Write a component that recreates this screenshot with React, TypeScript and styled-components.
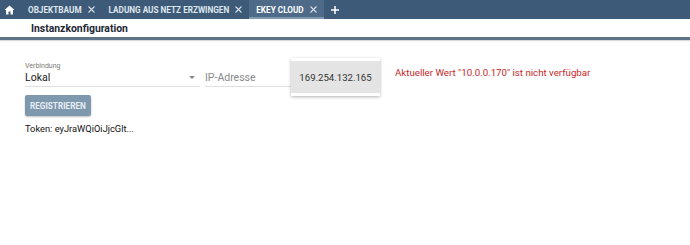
import React from "react";
import styled, { createGlobalStyle } from "styled-components";

const GlobalStyle = createGlobalStyle`
    html, body {
        margin: 0;
        padding: 0;
        background: #ffffff;
        font-family: Roboto, "Liberation Sans", sans-serif;
    }
`;

const Page = styled.div`
    width: 690px;
    height: 245px;
    overflow: hidden;
    display: flex;
    flex-direction: column;
`;

const TabBar = styled.div`
    height: 19px;
    background: #3d5b78;
    display: flex;
    align-items: stretch;
`;

const HomeButton = styled.div`
    width: 19px;
    display: flex;
    align-items: center;
    justify-content: center;
    margin-right: 2px;
`;

const Tab = styled.div<{ $active?: boolean }>`
    display: flex;
    align-items: center;
    gap: 6px;
    padding: 0 7px;
    background: ${(p) => (p.$active ? "#4d6b88" : "transparent")};
    box-shadow: ${(p) => (p.$active ? "inset 0 -2px 0 #7f98ae" : "none")};
    color: ${(p) => (p.$active ? "#ffffff" : "#dfe6ee")};
    font-size: 8.2px;
    font-weight: 700;
`;

const AddTab = styled.div`
    display: flex;
    align-items: center;
    padding-left: 7px;
`;

const Toolbar = styled.div`
    height: 18px;
    padding-left: 31px;
    display: flex;
    align-items: center;
    font-size: 10.4px;
    font-weight: 700;
    color: #1e2a36;
    border-bottom: 3px solid #5d7489;
    box-shadow: 0 1px 1px rgba(0, 0, 0, 0.15);
`;

const Content = styled.div`
    padding: 18px 25px 0;
    display: flex;
    flex-direction: column;
`;

const FieldRow = styled.div`
    display: flex;
    align-items: flex-start;
`;

const SelectField = styled.div`
    width: 175px;
    margin-top: 4px;
    border-bottom: 1px solid #e0e0e0;
    position: relative;
`;

const FieldLabel = styled.div`
    font-size: 7px;
    color: #777;
    line-height: 9px;
`;

const SelectValue = styled.div`
    font-size: 10.5px;
    color: #222;
    height: 15px;
    line-height: 14px;
`;

const Arrow = styled.div`
    position: absolute;
    right: 5px;
    bottom: 7px;
    width: 0;
    height: 0;
    border-left: 3px solid transparent;
    border-right: 3px solid transparent;
    border-top: 3px solid #888;
`;

const InputWrap = styled.div`
    position: relative;
    margin-left: 5px;
    margin-top: 13px;
`;

const TextInput = styled.div`
    width: 86px;
    height: 15px;
    border-bottom: 1px solid #e0e0e0;
    font-size: 10.5px;
    line-height: 14px;
    color: #8a8a8a;
`;

const Menu = styled.div`
    position: absolute;
    left: 86px;
    top: -13px;
    width: 89px;
    padding: 3px 0;
    background: #ffffff;
    box-shadow: 0 1px 3px rgba(0, 0, 0, 0.3);
`;

const MenuItem = styled.div`
    height: 32px;
    background: #e4e4e4;
    display: flex;
    align-items: center;
    justify-content: center;
    font-size: 9.6px;
    color: #333;
`;

const ErrorText = styled.div`
    margin-left: 104px;
    margin-top: 9px;
    font-size: 9.7px;
    color: #c62828;
`;

const RegisterButton = styled.button`
    align-self: flex-start;
    margin-top: 8px;
    height: 21px;
    padding: 0 5px;
    border: none;
    border-radius: 2px;
    background: #7e98ae;
    color: #e7edf3;
    font-family: inherit;
    font-size: 8.2px;
    font-weight: 700;
    box-shadow: 0 1px 2px rgba(0, 0, 0, 0.25);
`;

const Token = styled.div`
    margin-top: 7px;
    font-size: 9.3px;
    color: #111;
`;

function HomeIcon() {
    return (
        <svg width="11" height="10" viewBox="0 0 11 10">
            <path d="M5.5 0.5 L0.5 5 H2 V9.5 H4.5 V6.5 H6.5 V9.5 H9 V5 H10.5 Z" fill="#ffffff" />
        </svg>
    );
}

function CloseIcon() {
    return (
        <svg width="7" height="7" viewBox="0 0 7 7">
            <path d="M0.5 0.5 L6.5 6.5 M6.5 0.5 L0.5 6.5" stroke="#d5dee8" strokeWidth="1.1" />
        </svg>
    );
}

function PlusIcon() {
    return (
        <svg width="8" height="8" viewBox="0 0 8 8">
            <path d="M4 0 V8 M0 4 H8" stroke="#ffffff" strokeWidth="1.5" />
        </svg>
    );
}

const tabs = [
    { name: "OBJEKTBAUM", active: false },
    { name: "LADUNG AUS NETZ ERZWINGEN", active: false },
    { name: "EKEY CLOUD", active: true },
];

function App() {
    return (
        <Page>
            <GlobalStyle />
            <TabBar>
                <HomeButton>
                    <HomeIcon />
                </HomeButton>
                {tabs.map((t) => (
                    <Tab key={t.name} $active={t.active}>
                        {t.name}
                        <CloseIcon />
                    </Tab>
                ))}
                <AddTab>
                    <PlusIcon />
                </AddTab>
            </TabBar>
            <Toolbar>Instanzkonfiguration</Toolbar>
            <Content>
                <FieldRow>
                    <SelectField>
                        <FieldLabel>Verbindung</FieldLabel>
                        <SelectValue>Lokal</SelectValue>
                        <Arrow />
                    </SelectField>
                    <InputWrap>
                        <TextInput>IP-Adresse</TextInput>
                        <Menu>
                            <MenuItem>169.254.132.165</MenuItem>
                        </Menu>
                    </InputWrap>
                    <ErrorText>Aktueller Wert "10.0.0.170" ist nicht verfügbar</ErrorText>
                </FieldRow>
                <RegisterButton>REGISTRIEREN</RegisterButton>
                <Token>Token: eyJraWQiOiJjcGlt...</Token>
            </Content>
        </Page>
    );
}

export default App;
